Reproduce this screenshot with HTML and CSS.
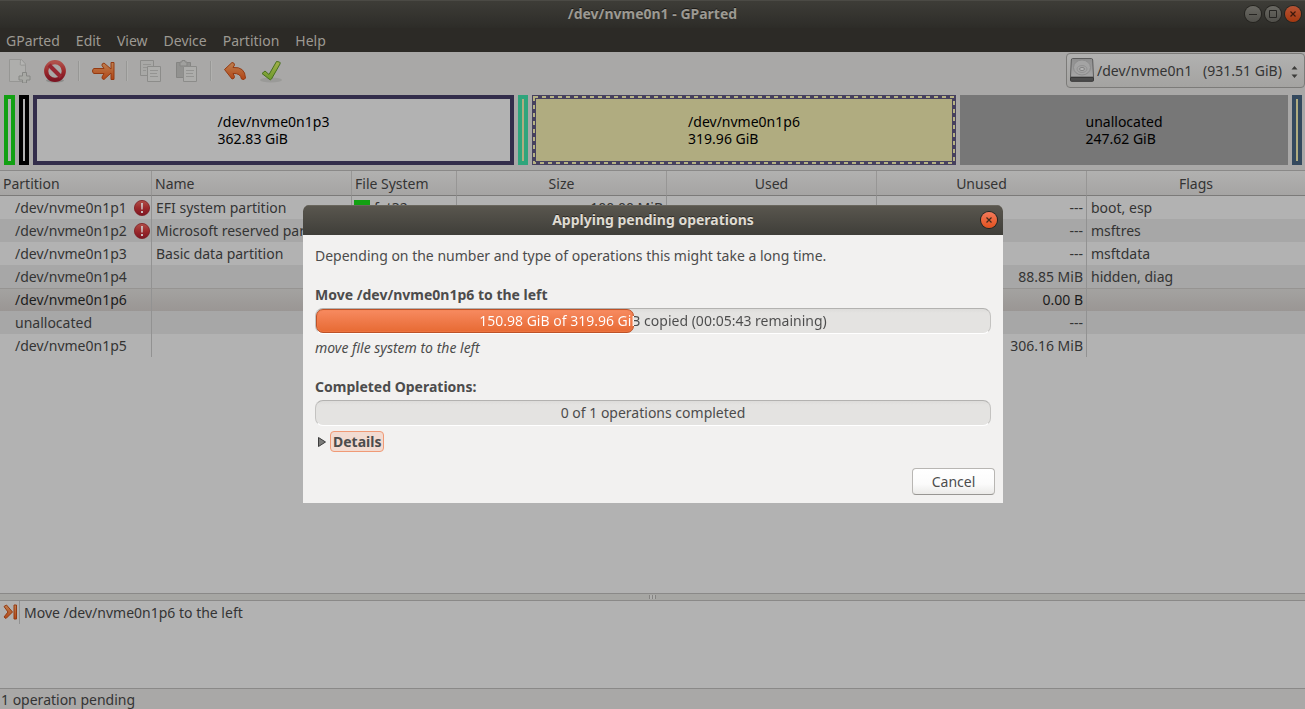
FILE: index.html
```html
<!DOCTYPE html>
<html lang="en">
<head>
<meta charset="utf-8">
<title>/dev/nvme0n1 - GParted</title>
<link rel="stylesheet" href="styles.css">
</head>
<body>
<svg class="defs" aria-hidden="true">
  <defs>
    <linearGradient id="orange" x1="0" y1="0" x2="0" y2="1"><stop offset="0" stop-color="#bd8050"/><stop offset="1" stop-color="#b24516"/></linearGradient>
    <linearGradient id="red" x1="0" y1="0" x2="0" y2="1"><stop offset="0" stop-color="#b0504a"/><stop offset="0.5" stop-color="#9c2a2c"/><stop offset="1" stop-color="#7c1422"/></linearGradient>
    <linearGradient id="green" x1="0" y1="0" x2="0" y2="1"><stop offset="0" stop-color="#a4b04a"/><stop offset="1" stop-color="#6c9a2c"/></linearGradient>
    <linearGradient id="metal" x1="0" y1="0" x2="0" y2="1"><stop offset="0" stop-color="#8e8e8e"/><stop offset="1" stop-color="#a6a6a6"/></linearGradient>
    <symbol id="alert" viewBox="0 0 16 16">
      <circle cx="8" cy="8" r="7.600" fill="url(#red)" stroke="#7c1a20" stroke-width="0.8"/>
      <path d="M7 3h2l-.3 6.500H7.300z" fill="#c8c0c0"/><rect x="7" y="11" width="2" height="2" fill="#c8c0c0"/>
    </symbol>
  </defs>
</svg>
<div class="window">
  <header class="titlebar">
    <h1 class="title">/dev/nvme0n1 - GParted</h1>
    <div class="controls">
      <button class="control" aria-label="Minimize"><svg viewBox="0 0 16 16"><path d="M4 8.500h8" stroke="#262522"/></svg></button>
      <button class="control" aria-label="Maximize"><svg viewBox="0 0 16 16"><path d="M4.500 4.500h7v7h-7z" fill="none" stroke="#262522"/></svg></button>
      <button class="control control-close" aria-label="Close"><svg viewBox="0 0 16 16"><path d="M5.500 5.500l5 5m0-5l-5 5" stroke="#3a180c" stroke-width="1.200"/></svg></button>
    </div>
  </header>
  <nav class="menubar">
    <button class="menu">GParted</button><button class="menu">Edit</button><button class="menu">View</button><button class="menu">Device</button><button class="menu">Partition</button><button class="menu">Help</button>
  </nav>
  <div class="toolbar">
    <div class="tools">
      <button class="tool" aria-label="New"><svg viewBox="0 0 24 24"><path d="M2.500 .5h12l4 4.500v17.500h-16z" fill="#aeaeac" stroke="#969694"/><path d="M13.500 .5c0 3-.5 5 0 5.500s3 0 5 0" fill="#b4b4b2" stroke="#969694"/><path d="M15.500 13.500h4v3.500h3.500v4h-3.500v3h-4V21H12v-4h3.500z" fill="#a8a9a5" stroke="#868784"/></svg></button>
      <button class="tool" aria-label="Delete"><svg viewBox="0 0 24 24"><ellipse cx="12" cy="21.500" rx="9" ry="2" fill="#8c8c8a"/><circle cx="12" cy="12" r="8.800" fill="none" stroke="url(#red)" stroke-width="4.200"/><path d="M6 6l12 12" stroke="#962631" stroke-width="4"/></svg></button>
      <span class="divider"></span>
      <button class="tool" aria-label="Resize or move"><svg viewBox="0 0 24 24"><path d="M3 9.500h10L11 6.500q-.5-2 2-2.500l7 6V3.500h3v17h-3v-6.500l-7 6.500q-2.500-.5-2-2.500l2-3.500H3q-1.500-.5-1.500-2.500T3 9.500z" fill="url(#orange)" stroke="#943a12"/></svg></button>
      <span class="divider"></span>
      <button class="tool" aria-label="Copy"><svg viewBox="0 0 24 24"><path d="M1.500 1.500h13v15h-13z" fill="#a8a8a6" stroke="#8c8c8a"/><path d="M4 5.500h8m-8 3h5m-5 3h3" stroke="#949492"/><path d="M8.500 7.500h13v15h-13z" fill="#adadab" stroke="#8c8c8a"/><path d="M11 11.500h8m-8 3h7m-7 3h8" stroke="#949492"/></svg></button>
      <button class="tool" aria-label="Paste"><svg viewBox="0 0 24 24"><path d="M1.500 3.500h14v15h-14z" fill="#929290" stroke="#858583"/><path d="M5 3h2V1.500h3V3h2v4H5z" fill="#a0a09e" stroke="#858583"/><path d="M8.500 7.500h13v15h-13z" fill="#adadab" stroke="#8c8c8a"/><path d="M11 11.500h8m-8 3h7m-7 3h8" stroke="#949492"/></svg></button>
      <span class="divider"></span>
      <button class="tool" aria-label="Undo"><svg viewBox="0 0 24 24"><path d="M1.500 10.500L9 3.500q2.500 0 2.500 2.500L10 8.500q12-1 12.500 10.500-1 2.500-4 1-1-6-8.500-5.500l1.500 3q0 2.500-2.500 2.500z" fill="url(#orange)" stroke="#943a12"/></svg></button>
      <button class="tool" aria-label="Apply"><svg viewBox="0 0 24 24"><ellipse cx="12" cy="21" rx="11" ry="2.500" fill="#9a9a98"/><path d="M3 14.500l3-2.500 4 3.500L17.500 2.500l3 .5q1 .5.500 2L12.500 20q-1 1.500-2.500 0z" fill="url(#green)" stroke="#47701d"/></svg></button>
    </div>
    <div class="device">
      <svg class="disk" viewBox="0 0 24 24" aria-hidden="true"><path d="M2.500 .5h19q1 0 1.200 1.500L23.500 19H.5L1.300 2q.2-1.500 1.200-1.500z" fill="url(#metal)" stroke="#5c5c5c"/><path d="M.5 19.500h23v3q0 .8-1 .8h-21q-1 0-1-.8z" fill="#4c4c4c" stroke="#383838"/><ellipse cx="12" cy="9.500" rx="8.500" ry="7.500" fill="#a4a4a4" stroke="#8c8c8c"/><ellipse cx="12" cy="11" rx="5" ry="3.500" fill="none" stroke="#929292"/><ellipse cx="12" cy="11" rx="2.500" ry="1.500" fill="#bababa" stroke="#808080"/></svg>
      <select class="device-select" aria-label="Device"><option>/dev/nvme0n1&nbsp;&nbsp; (931.51 GiB)</option></select>
      <svg class="spin" viewBox="0 0 7 14" aria-hidden="true"><path d="M.5 4.500l3-3.500 3 3.500zM.5 9.500h6l-3 3.500z" fill="#3c3c3a"/></svg>
    </div>
  </div>
  <div class="map">
    <div class="part part-fat"></div>
    <div class="part part-msr"></div>
    <div class="part part-p3"><p class="part-label">/dev/nvme0n1p3<br>362.83 GiB</p></div>
    <div class="part part-p4"></div>
    <div class="part part-p6"><svg class="ants" aria-hidden="true"><rect class="ants-line" x="2" y="2" width="100%" height="100%"/></svg><p class="part-label">/dev/nvme0n1p6<br>319.96 GiB</p></div>
    <div class="part part-free"><p class="part-label">unallocated<br>247.62 GiB</p></div>
    <div class="part part-p5"></div>
  </div>
  <main class="list">
    <table class="table">
      <colgroup><col class="c-part"><col class="c-name"><col class="c-fs"><col class="c-size"><col class="c-size"><col class="c-size"><col></colgroup>
      <thead><tr><th class="left">Partition</th><th class="left">Name</th><th class="left">File System</th><th>Size</th><th>Used</th><th>Unused</th><th>Flags</th></tr></thead>
      <tbody>
        <tr><td class="path"><span class="dev">/dev/nvme0n1p1<svg class="alert"><use href="#alert"/></svg></span></td><td>EFI system partition</td><td class="fs-cell"><span class="fs"><i class="swatch"></i>fat32</span></td><td class="num">100.00 MiB</td><td></td><td class="num">---</td><td>boot, esp</td></tr>
        <tr><td class="path"><span class="dev">/dev/nvme0n1p2<svg class="alert"><use href="#alert"/></svg></span></td><td>Microsoft reserved partition</td><td></td><td></td><td></td><td class="num">---</td><td>msftres</td></tr>
        <tr><td class="path"><span class="dev">/dev/nvme0n1p3</span></td><td>Basic data partition</td><td></td><td></td><td></td><td class="num">---</td><td>msftdata</td></tr>
        <tr><td class="path"><span class="dev">/dev/nvme0n1p4</span></td><td></td><td></td><td></td><td></td><td class="num">88.85 MiB</td><td>hidden, diag</td></tr>
        <tr class="selected"><td class="path"><span class="dev">/dev/nvme0n1p6</span></td><td></td><td></td><td></td><td></td><td class="num">0.00 B</td><td></td></tr>
        <tr><td class="path"><span class="dev">unallocated</span></td><td></td><td></td><td></td><td></td><td class="num">---</td><td></td></tr>
        <tr><td class="path"><span class="dev">/dev/nvme0n1p5</span></td><td></td><td></td><td></td><td></td><td class="num">306.16 MiB</td><td></td></tr>
      </tbody>
    </table>
  </main>
  <div class="splitter"><span class="grip"></span></div>
  <section class="pending">
    <div class="op"><span class="op-icon"><svg class="op-svg" viewBox="0 0 16 16"><path d="M1 2.500l2.500-1.500L9.500 8 3 14.500 1 13l4-5zM11 1h2.500v14H11z" fill="url(#orange)" stroke="#963a12"/></svg></span><span class="op-text">Move /dev/nvme0n1p6 to the left</span></div>
  </section>
  <footer class="status">1 operation pending</footer>
</div>
<div class="overlay">
  <section class="dialog" role="dialog" aria-labelledby="dialog-title">
    <header class="dialog-bar">
      <h2 class="dialog-title" id="dialog-title">Applying pending operations</h2>
      <button class="control dialog-close" aria-label="Close dialog"><svg viewBox="0 0 16 16"><path d="M5.500 5.500l5 5m0-5l-5 5" stroke="#3f2a1c" stroke-width="1.200"/></svg></button>
    </header>
    <div class="dialog-body">
      <p class="line intro">Depending on the number and type of operations this might take a long time.</p>
      <h3 class="line heading">Move /dev/nvme0n1p6 to the left</h3>
      <div class="progress" role="progressbar" aria-valuenow="47" aria-valuemin="0" aria-valuemax="100"><div class="fill" style="width:47.2%"></div><span class="progress-text two-tone">150.98 GiB of 319.96 GiB copied (00:05:43 remaining)</span></div>
      <p class="line step">move file system to the left</p>
      <h3 class="line heading">Completed Operations:</h3>
      <div class="progress" role="progressbar" aria-valuenow="0" aria-valuemin="0" aria-valuemax="1"><span class="progress-text">0 of 1 operations completed</span></div>
      <button class="expander" aria-expanded="false"><svg class="arrow" viewBox="0 0 10 10"><path d="M1.500 .5v9l7-4.500z" fill="#7c7c7a" stroke="#3c3c3c"/></svg><span class="expander-label">Details</span></button>
      <div class="actions"><button class="cancel">Cancel</button></div>
    </div>
  </section>
</div>
</body>
</html>
```
FILE: styles.css
```css
* { box-sizing: border-box; }
body { margin: 0; font: 14px/18px "Noto Sans", sans-serif; color: #343434; background: #a9a8a7; }
h1, h2, h3, p { margin: 0; font-size: 14px; }
button, select { font: inherit; color: inherit; border: 0; padding: 0; margin: 0; background: none; }
.defs { position: absolute; width: 0; height: 0; }
.window { display: flex; flex-direction: column; height: 100vh; overflow: hidden; }

.titlebar { display: grid; grid-template-columns: 1fr auto 1fr; align-items: center; height: 28px; flex: none; padding: 0 4px; background: linear-gradient(#3e3d38, #2d2c28); box-shadow: inset 0 1px #4b4a45; }
.title { grid-column: 2; color: #9c9992; text-shadow: 0 -1px #1c1b18; }
.controls { display: flex; gap: 4px; justify-content: flex-end; }
.control { width: 16px; height: 16px; border-radius: 50%; background: linear-gradient(#6a6963, #504f4a); box-shadow: 0 0 0 1px #24231f; }
.control svg { display: block; width: 16px; height: 16px; }
.control-close { background: linear-gradient(#b65334, #a43810); }

.menubar { display: flex; flex: none; height: 24px; background: #2c2a26; color: #9c9992; }
.menu { padding: 2px 10px 0 6px; }

.toolbar { display: flex; flex: none; justify-content: space-between; height: 39px; background: #a9a8a7; }
.tools { display: flex; align-items: center; padding: 0 0 2px 7px; gap: 11px; }
.tool { width: 24px; height: 24px; }
.tool + .tool { margin-left: 1px; }
.tool svg { display: block; width: 24px; height: 24px; }
.divider { width: 2px; height: 20px; background: #979795; border-right: 1px solid #b1b1af; }
.device { position: relative; height: 36px; margin-top: 1px; }
.device-select { appearance: none; height: 35px; padding: 0 22px 0 30px; border: 1px solid #7c7b79; border-radius: 4px; background: linear-gradient(#b1b1b0, #a4a3a1); color: #343434; }
.disk { position: absolute; left: 4px; top: 5px; width: 24px; height: 24px; }
.spin { position: absolute; right: 7px; top: 12px; width: 7px; height: 14px; }

.map { display: flex; flex: none; gap: 4px; height: 79px; padding: 4px 3px 5px 4px; color: #000; }
.part { position: relative; display: flex; align-items: center; justify-content: center; flex: 0 0 10px; min-width: 0; border: 4px solid; background: #b2b2b2; }
.part-label { color: #000; line-height: 17px; font-weight: 400; white-space: nowrap; }
.part-fat { flex-basis: 11px; border-color: #12a012; }
.part-msr { border-color: #000; }
.part-p3 { flex: 481 481 481px; border-color: #332d4b; }
.part-p4 { border-color: #2fa57c; background: #b0ac80; }
.part-p6 { flex: 424 424 424px; border-color: #46405e; background: #b0ac80; }
.part-free { flex: 328 328 328px; border-color: #777; background: #777; }
.part-p5 { border-color: #34495e; background: #b0ac80; }
.ants { position: absolute; inset: -4px; width: calc(100% + 4px); height: calc(100% + 4px); overflow: visible; }
.ants-line { fill: none; stroke: #b5b184; stroke-width: 2px; stroke-dasharray: 4 4; }

.list { flex: 1; min-height: 0; overflow: hidden; background: #b2b2b2; border-top: 1px solid #8a8988; }
.table { width: 100%; table-layout: fixed; border-collapse: separate; border-spacing: 0; }
.c-part { width: 152px; }
.c-name { width: 200px; }
.c-fs { width: 105px; }
.c-size { width: 210px; }
.table th { height: 25px; padding: 2px 3px 0; font-weight: 400; border-bottom: 1px solid #7b7a79; border-right: 1px solid #979695; background: linear-gradient(#b1b1b0, #a5a4a3); }
.table .left { text-align: left; }
.table td { height: 23px; padding: 0 3px 0 4px; border-right: 1px solid #929292; white-space: nowrap; overflow: hidden; }
.table th:last-child, .table td:last-child { border-right: 0; }
.table .path { padding-right: 1px; }
.table .fs-cell { padding-left: 2px; }
.table tbody tr:nth-child(even) { background: #a7a7a7; }
.table tbody .selected { background: linear-gradient(#a4a3a1, #9a9694); color: #1c1c1c; }
.table .selected td { border-top: 1px solid #969492; }
.table .num { text-align: right; }
.dev { display: flex; align-items: center; justify-content: space-between; padding-left: 11px; }
.alert { width: 16px; height: 16px; flex: none; }
.fs { display: flex; align-items: center; gap: 4px; }
.swatch { width: 16px; height: 16px; background: #12a012; }

.splitter { display: flex; align-items: center; justify-content: center; flex: none; height: 8px; border: 1px solid #8a8988; border-width: 1px 0; background: #a6a6a3; }
.grip { width: 7px; height: 4px; background: repeating-linear-gradient(90deg, #858482 0 1px, #b0b0ae 1px 3px); }
.pending { flex: none; height: 87px; background: #b2b2b2; }
.op { display: flex; align-items: center; height: 23px; }
.op-icon { width: 20px; height: 23px; padding: 3px; border-right: 1px solid #929292; }
.op-svg { display: block; width: 16px; height: 16px; }
.op-text { padding-left: 4px; }
.status { flex: none; height: 21px; padding: 2px 1px 0; border-top: 1px solid #8a8988; }

.overlay { position: fixed; inset: 0; display: flex; align-items: center; justify-content: center; padding: 0 0 1px 1px; }
.dialog { width: 700px; max-width: 100%; border-radius: 6px 6px 0 0; background: #f2f1f0; color: #4c4c4c; overflow: hidden; }
.dialog-bar { display: grid; grid-template-columns: 1fr auto 1fr; align-items: center; height: 30px; padding: 0 6px; background: linear-gradient(#5a574f, #3f3e39); box-shadow: inset 0 1px #69665d; }
.dialog-title { grid-column: 2; color: #dfdbd2; text-shadow: 0 -1px #2a2925; }
.dialog-close { justify-self: end; background: linear-gradient(#f4795a, #e2521f); }
.dialog-body { padding: 12px 8px 8px 12px; }
.line { line-height: 18px; margin-right: 4px; }
.intro { margin-bottom: 21px; }
.heading { margin-bottom: 4px; font-weight: 700; }
.step { margin: 5px 0 21px; font-style: italic; }
.progress { position: relative; height: 26px; margin-right: 4px; border: 1px solid #c4c3c1; border-top-color: #b3b2b0; border-bottom-color: #fff; border-radius: 8px; background: linear-gradient(#dddcda, #e4e3e1 4px); }
.fill { position: absolute; left: 0; top: 0; height: 24px; border: 1px solid #bd5228; border-radius: 7px; background: linear-gradient(#f78a60, #e76a33); box-shadow: inset 0 0 0 1px #f5834f66; }
.progress-text { position: relative; display: block; text-align: center; line-height: 24px; }
.two-tone { color: transparent; background: linear-gradient(90deg, #fff 47.2%, #4c4c4c 47.2%); background-clip: text; -webkit-background-clip: text; }
.expander { display: flex; align-items: center; gap: 3px; margin-top: 5px; padding-left: 2px; }
.arrow { width: 10px; height: 10px; }
.expander-label { padding: 0 2px; line-height: 19px; font-weight: 700; border: 1px solid #f09a76; border-radius: 4px; background: #f2dbd1; }
.actions { display: flex; justify-content: flex-end; margin-top: 16px; }
.cancel { min-width: 83px; height: 27px; border: 1px solid #b8b6b3; border-bottom-color: #989693; border-radius: 4px; background: linear-gradient(#fff, #fbfbfb 60%, #ebeae8); }
```
